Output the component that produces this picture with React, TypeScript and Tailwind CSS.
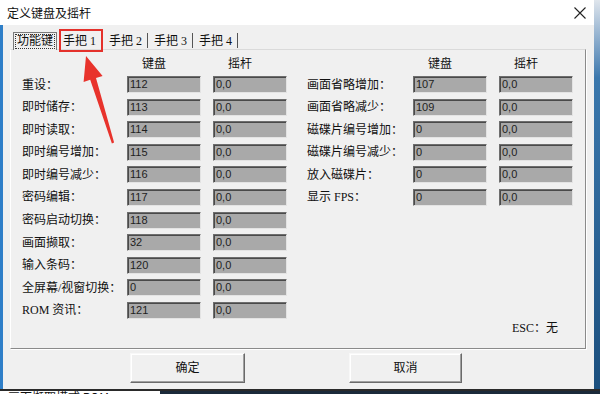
import React from 'react';

const LEFT: [string, string][] = [
  ['重设：', '112'],
  ['即时储存：', '113'],
  ['即时读取：', '114'],
  ['即时编号增加：', '115'],
  ['即时编号减少：', '116'],
  ['密码编辑：', '117'],
  ['密码启动切换：', '118'],
  ['画面撷取：', '32'],
  ['输入条码：', '120'],
  ['全屏幕/视窗切换：', '0'],
  ['ROM 资讯：', '121'],
];

const RIGHT: [string, string][] = [
  ['画面省略增加：', '107'],
  ['画面省略减少：', '109'],
  ['磁碟片编号增加：', '0'],
  ['磁碟片编号减少：', '0'],
  ['放入磁碟片：', '0'],
  ['显示 FPS：', '0'],
];

const Box = ({ value }: { value: string }) => (
  <div className="h-[17px] w-[74px] bg-[#a9a9a9] border border-t-[#6e6e6e] border-l-[#6e6e6e] border-r-[#e3e3e3] border-b-[#e3e3e3] shadow-[inset_1px_1px_0_#4a4a4a] pl-[2px] text-[11px] leading-[15px] text-[#1e1e1e] font-['Liberation_Sans',sans-serif]">
    {value}
  </div>
);

const Group = ({ rows, labelW, esc }: { rows: [string, string][]; labelW: string; esc?: boolean }) => (
  <div className="flex flex-col">
    <div className="flex h-[17px] items-center">
      <div className={labelW} />
      <div className="w-[74px] pl-[15px]">键盘</div>
      <div className="ml-[12px] w-[74px] pl-[15px]">摇杆</div>
    </div>
    <div className="mt-[4px] flex flex-col gap-[5.6px]">
      {rows.map(([label, key]) => (
        <div key={label} className="flex h-[17px] items-center">
          <div className={labelW + ' whitespace-nowrap'}>{label}</div>
          <Box value={key} />
          <div className="ml-[12px]">
            <Box value="0,0" />
          </div>
        </div>
      ))}
    </div>
    {esc && (
      <div className="mt-auto mb-[-9px] mr-[15px] h-[17px] self-end leading-[17px]">ESC：无</div>
    )}
  </div>
);

const Button = ({ label, className }: { label: string; className: string }) => (
  <button className={'h-[30px] bg-[#f0f0f0] border border-t-[#f8f8f8] border-l-[#f8f8f8] border-r-[#6a6a6a] border-b-[#6a6a6a] shadow-[inset_-1px_-1px_0_#a0a0a0,inset_1px_1px_0_#ffffff] text-[12px] text-[#111] ' + className}>
    {label}
  </button>
);

export default function App() {
  return (
    <div className="relative flex h-[394px] w-[600px] flex-col overflow-hidden bg-[#f0f0f0] text-[12px] text-[#111] font-['Liberation_Serif','Noto_Sans_CJK_SC',serif]">
      <div className="flex h-[389px]">
        <div className="flex flex-1 flex-col">
          <div className="flex h-[25px] items-center justify-between bg-white pl-[7px] pr-[6px]">
            <span className="text-[12px] font-['Noto_Sans_CJK_SC',sans-serif]">定义键盘及摇杆</span>
            <svg width="14" height="14" viewBox="0 0 14 14" className="mr-[1px]">
              <path d="M1.5 1.5 L12.5 12.5 M12.5 1.5 L1.5 12.5" stroke="#222" strokeWidth="1.1" />
            </svg>
          </div>
          <div className="flex flex-1">
            <div className="w-[3px] bg-[#2f7fc8]" />
            <div className="flex flex-1 flex-col pl-[7px] pr-[8px] pt-[4px]">
              {/* tab strip */}
              <div className="flex h-[20px] items-end pl-[3px]">
                <div className="relative z-10 mb-[-1px] flex h-[18px] w-[44px] items-center justify-center border border-b-0 border-[#7a7a7a] bg-[#f0f0f0]">
                  <span className="border border-dotted border-[#333] px-[1px] leading-[13px]">功能键</span>
                </div>
                {['手把 1', '手把 2', '手把 3', '手把 4'].map((t, i) => (
                  <div key={t} className={'mb-[1px] flex h-[15px] items-center border-r border-[#555] pl-[6px] leading-[14px] ' + (i === 0 ? 'w-[46px]' : 'w-[45px]')}>
                    {t}
                  </div>
                ))}
              </div>
              {/* panel */}
              <div className="flex h-[300px] flex-col border border-t-[#dadada] border-l-[#ffffff] border-r-[#8a8a8a] border-b-[#8a8a8a] shadow-[1px_1px_0_#ffffff]">
                <div className="flex flex-1 gap-[20px] pb-[20px] pl-[11px] pr-[12px] pt-[5px]">
                  <Group rows={LEFT} labelW="w-[105px]" />
                  <Group rows={RIGHT} labelW="w-[106px]" esc />
                </div>
              </div>
              {/* buttons */}
              <div className="mt-[4px] flex">
                <Button label="确定" className="ml-[120px] w-[115px]" />
                <Button label="取消" className="ml-[104px] w-[113px]" />
              </div>
            </div>
          </div>
        </div>
        <div className="w-[6px] bg-gradient-to-b from-[#dfe5ec] via-[#3b78ad] via-20% to-[#1b4f7e]" />
      </div>
      <div className="flex h-[5px] overflow-hidden border-t-2 border-[#2a2a2a] bg-white">
        <span className="ml-[8px] text-[12px] leading-[12px] font-['Noto_Sans_CJK_SC',sans-serif]">画面撷取模式 ROM</span>
        <div className="ml-auto w-[440px] bg-[#1b2a3a]" />
      </div>
      {/* annotation: red box + arrow */}
      <div className="absolute left-[59px] top-[29px] h-[23px] w-[44px] border-2 border-[#e4312b]" />
      <svg className="absolute left-0 top-0" width="600" height="394">
        <polygon points="86,56 102.6,75.9 96,78 114.1,142.6 111.9,143.4 90.2,79.8 83.6,81.9" fill="#e8332c" />
      </svg>
    </div>
  );
}
